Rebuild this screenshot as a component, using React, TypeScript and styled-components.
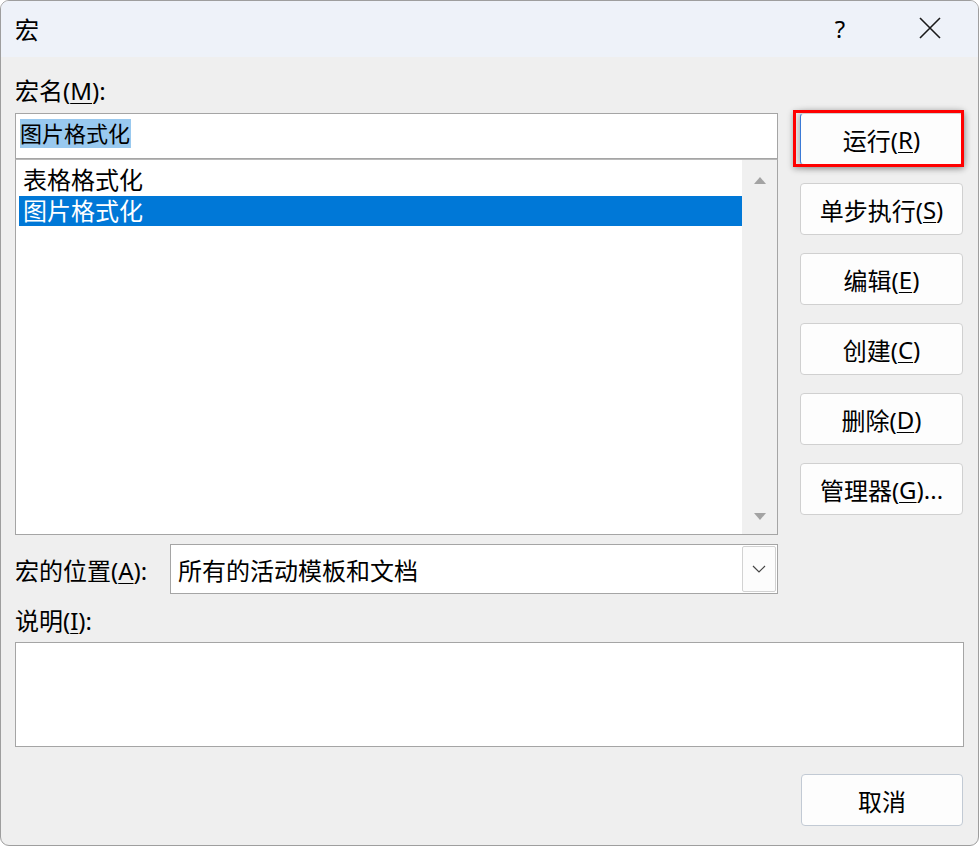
import React from "react";
import styled, { createGlobalStyle } from "styled-components";

const GlobalStyle = createGlobalStyle`
    html, body {
        margin: 0;
        padding: 0;
        background: #ffffff;
    }
    body {
        font-family: "Noto Sans", "Noto Sans CJK SC", sans-serif;
    }
`;

const Window = styled.div`
    width: 979px;
    height: 846px;
    box-sizing: border-box;
    border: 1px solid #9e9e9e;
    border-radius: 9px;
    overflow: hidden;
    background: #efefef;
    display: flex;
    flex-direction: column;
    font-family: "Noto Sans", "Noto Sans CJK SC", sans-serif;
    font-size: 24px;
    color: #000;
`;

const TitleBar = styled.div`
    height: 56px;
    flex-shrink: 0;
    background: #eef2f9;
    display: flex;
    align-items: center;
    padding-left: 14px;
    padding-bottom: 2px;
    box-sizing: border-box;
`;

const TitleText = styled.div`
    flex: 1;
    font-size: 24px;
`;

const TitleButton = styled.div<{ $w: number }>`
    width: ${(p) => p.$w}px;
    height: 40px;
    display: flex;
    align-items: center;
    justify-content: center;
    font-size: 24px;
`;

const Body = styled.div`
    flex: 1;
    display: flex;
    flex-direction: column;
    padding: 0 14px;
`;

const Label = styled.div<{ $top: number }>`
    line-height: 30px;
    height: 30px;
    margin-top: ${(p) => p.$top}px;
    white-space: nowrap;
`;

const Mn = styled.span`
    text-decoration: underline;
    text-underline-offset: 3px;
    text-decoration-thickness: 1px;
`;

const MainGrid = styled.div`
    display: grid;
    grid-template-columns: 763px 163px;
    column-gap: 22px;
    margin-top: 7px;
`;

const LeftColumn = styled.div`
    display: flex;
    flex-direction: column;
`;

const NameInput = styled.div`
    height: 46px;
    box-sizing: border-box;
    border: 1px solid #a5a5a5;
    background: #fff;
    padding: 4px 0 0 4px;
    font-size: 22px;
`;

const Selected = styled.span`
    display: inline-block;
    background: #99c9ef;
    line-height: 29px;
    height: 29px;
    padding-right: 1px;
`;

const ListBox = styled.div`
    height: 376px;
    box-sizing: border-box;
    border: 1px solid #a5a5a5;
    border-top-color: #b9b9b9;
    background: #fff;
    display: flex;
`;

const ListItems = styled.div`
    flex: 1;
    padding: 5px 0 0 3px;
`;

const ListRow = styled.div<{ $active?: boolean }>`
    height: 30px;
    line-height: 30px;
    padding-left: 4px;
    margin-top: ${(p) => (p.$active ? "1px" : "0")};
    background: ${(p) => (p.$active ? "#0078d7" : "transparent")};
    color: ${(p) => (p.$active ? "#fff" : "#000")};
`;

const ScrollTrack = styled.div`
    width: 35px;
    background: #f0f0f0;
    display: flex;
    flex-direction: column;
    justify-content: space-between;
    align-items: center;
    padding: 17px 0 14px;
`;

const LocationRow = styled.div`
    display: flex;
    align-items: center;
    margin-top: 9px;
`;

const LocationLabel = styled.div`
    width: 155px;
    white-space: nowrap;
`;

const Combo = styled.div`
    flex: 1;
    height: 50px;
    box-sizing: border-box;
    border: 1px solid #a5a5a5;
    background: #fff;
    display: flex;
    align-items: center;
    padding: 0 1px 0 7px;
`;

const ComboText = styled.div`
    flex: 1;
`;

const ComboButton = styled.div`
    width: 34px;
    height: 46px;
    box-sizing: border-box;
    border: 1px solid #d2d2d2;
    border-radius: 2px;
    background: #fcfcfc;
    display: flex;
    align-items: center;
    justify-content: center;
`;

const ButtonColumn = styled.div`
    display: flex;
    flex-direction: column;
    gap: 18px;
`;

const DialogButton = styled.div<{ $highlight?: boolean }>`
    position: relative;
    height: 52px;
    box-sizing: border-box;
    border: 1px solid #d0d0d0;
    border-radius: 4px;
    background: #fdfdfd;
    display: flex;
    align-items: center;
    justify-content: center;
    white-space: nowrap;
    box-shadow: ${(p) => (p.$highlight ? "0 0 8px rgba(0,0,0,0.35)" : "none")};
    border-left: ${(p) => (p.$highlight ? "1px solid #3b7ad6" : "1px solid #d0d0d0")};

    &::after {
        content: "";
        display: ${(p) => (p.$highlight ? "block" : "none")};
        position: absolute;
        left: -8px;
        right: -2px;
        top: -4px;
        bottom: -3px;
        border: 3px solid #ff0000;
        box-shadow: 0 2px 6px rgba(0, 0, 0, 0.3);
    }
`;

const DescBox = styled.div`
    height: 105px;
    box-sizing: border-box;
    border: 1px solid #a5a5a5;
    background: #fff;
    margin-top: 6px;
`;

const Footer = styled.div`
    display: flex;
    justify-content: flex-end;
    margin-top: 27px;
    padding-right: 1px;
`;

const CancelButton = styled(DialogButton)`
    width: 162px;
    border-color: #c2cad4;
`;

const Triangle = ({ down }: { down?: boolean }) => (
    <svg width="12" height="7" viewBox="0 0 12 7">
        <polygon
            points={down ? "0,0 12,0 6,7" : "0,7 12,7 6,0"}
            fill="#a3a3a3"
        />
    </svg>
);

const App = (): JSX.Element => {
    return (
        <React.Fragment>
            <GlobalStyle />
            <Window>
                <TitleBar>
                    <TitleText>宏</TitleText>
                    <TitleButton $w={84}>?</TitleButton>
                    <TitleButton $w={96}>
                        <svg width="22" height="22" viewBox="0 0 22 22">
                            <path
                                d="M1 1 L21 21 M21 1 L1 21"
                                stroke="#1a1a1a"
                                strokeWidth="1.6"
                            />
                        </svg>
                    </TitleButton>
                </TitleBar>
                <Body>
                    <Label $top={19}>
                        宏名(<Mn>M</Mn>):
                    </Label>
                    <MainGrid>
                        <LeftColumn>
                            <NameInput>
                                <Selected>图片格式化</Selected>
                            </NameInput>
                            <ListBox>
                                <ListItems>
                                    <ListRow>表格格式化</ListRow>
                                    <ListRow $active>图片格式化</ListRow>
                                </ListItems>
                                <ScrollTrack>
                                    <Triangle />
                                    <Triangle down />
                                </ScrollTrack>
                            </ListBox>
                            <LocationRow>
                                <LocationLabel>
                                    宏的位置(<Mn>A</Mn>):
                                </LocationLabel>
                                <Combo>
                                    <ComboText>所有的活动模板和文档</ComboText>
                                    <ComboButton>
                                        <svg width="14" height="8" viewBox="0 0 14 8">
                                            <path
                                                d="M1 1 L7 7 L13 1"
                                                fill="none"
                                                stroke="#444"
                                                strokeWidth="1.2"
                                            />
                                        </svg>
                                    </ComboButton>
                                </Combo>
                            </LocationRow>
                        </LeftColumn>
                        <ButtonColumn>
                            <DialogButton $highlight>
                                运行(<Mn>R</Mn>)
                            </DialogButton>
                            <DialogButton>
                                单步执行(<Mn>S</Mn>)
                            </DialogButton>
                            <DialogButton>
                                编辑(<Mn>E</Mn>)
                            </DialogButton>
                            <DialogButton>
                                创建(<Mn>C</Mn>)
                            </DialogButton>
                            <DialogButton>
                                删除(<Mn>D</Mn>)
                            </DialogButton>
                            <DialogButton>
                                管理器(<Mn>G</Mn>)...
                            </DialogButton>
                        </ButtonColumn>
                    </MainGrid>
                    <Label $top={12}>
                        说明(<Mn>I</Mn>):
                    </Label>
                    <DescBox />
                    <Footer>
                        <CancelButton>取消</CancelButton>
                    </Footer>
                </Body>
            </Window>
        </React.Fragment>
    );
};

export default App;
